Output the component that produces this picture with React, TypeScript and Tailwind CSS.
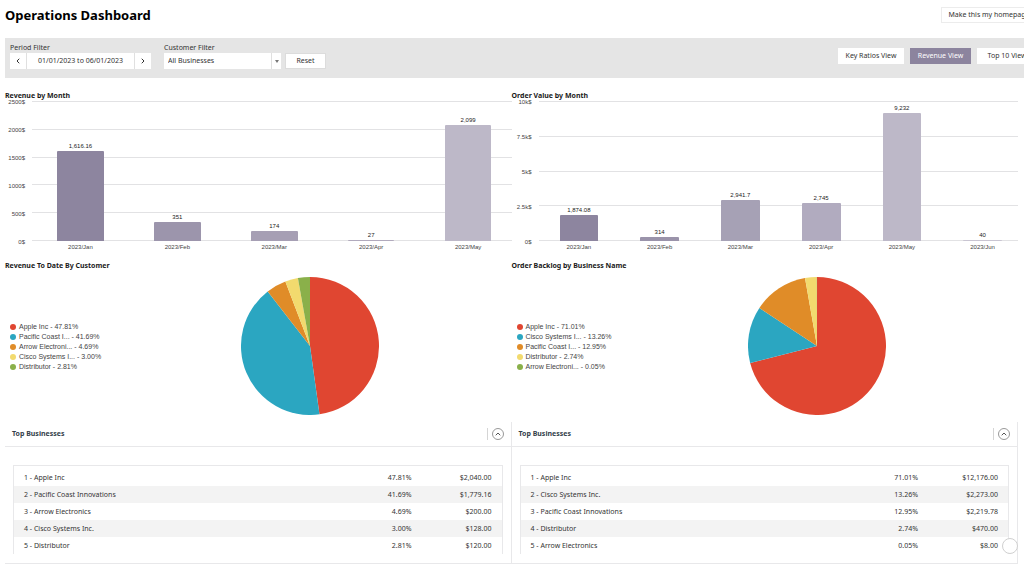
import { ChevronLeft, ChevronRight, ChevronUp } from "lucide-react";

type Bar = { month: string; value: number; label: string; color: string };
type Slice = { name: string; percent: number; color: string };
type Business = { name: string; percent: string; amount: string };

const RED = "#e04631";
const BLUE = "#2ba6c1";
const ORANGE = "#e08c28";
const YELLOW = "#f2da6e";
const GREEN = "#8ab04a";

const revenueBars: Bar[] = [
  { month: "2023/Jan", value: 1616.16, label: "1,616.16", color: "#8d859f" },
  { month: "2023/Feb", value: 351, label: "351", color: "#9c95ac" },
  { month: "2023/Mar", value: 174, label: "174", color: "#a69fb4" },
  { month: "2023/Apr", value: 27, label: "27", color: "#b1aabd" },
  { month: "2023/May", value: 2099, label: "2,099", color: "#bdb8c8" },
];

const orderBars: Bar[] = [
  { month: "2023/Jan", value: 1874.08, label: "1,874.08", color: "#8d859f" },
  { month: "2023/Feb", value: 314, label: "314", color: "#9a93aa" },
  { month: "2023/Mar", value: 2941.7, label: "2,941.7", color: "#a6a1b5" },
  { month: "2023/Apr", value: 2745, label: "2,745", color: "#b1abbf" },
  { month: "2023/May", value: 9232, label: "9,232", color: "#bdb8c8" },
  { month: "2023/Jun", value: 40, label: "40", color: "#c9c5d2" },
];

const revenueSlices: Slice[] = [
  { name: "Apple Inc", percent: 47.81, color: RED },
  { name: "Pacific Coast I...", percent: 41.69, color: BLUE },
  { name: "Arrow Electroni...", percent: 4.69, color: ORANGE },
  { name: "Cisco Systems I...", percent: 3.0, color: YELLOW },
  { name: "Distributor", percent: 2.81, color: GREEN },
];

const backlogSlices: Slice[] = [
  { name: "Apple Inc", percent: 71.01, color: RED },
  { name: "Cisco Systems I...", percent: 13.26, color: BLUE },
  { name: "Pacific Coast I...", percent: 12.95, color: ORANGE },
  { name: "Distributor", percent: 2.74, color: YELLOW },
  { name: "Arrow Electroni...", percent: 0.05, color: GREEN },
];

const revenueBusinesses: Business[] = [
  { name: "Apple Inc", percent: "47.81%", amount: "$2,040.00" },
  { name: "Pacific Coast Innovations", percent: "41.69%", amount: "$1,779.16" },
  { name: "Arrow Electronics", percent: "4.69%", amount: "$200.00" },
  { name: "Cisco Systems Inc.", percent: "3.00%", amount: "$128.00" },
  { name: "Distributor", percent: "2.81%", amount: "$120.00" },
];

const orderBusinesses: Business[] = [
  { name: "Apple Inc", percent: "71.01%", amount: "$12,176.00" },
  { name: "Cisco Systems Inc.", percent: "13.26%", amount: "$2,273.00" },
  { name: "Pacific Coast Innovations", percent: "12.95%", amount: "$2,219.78" },
  { name: "Distributor", percent: "2.74%", amount: "$470.00" },
  { name: "Arrow Electronics", percent: "0.05%", amount: "$8.00" },
];

function BarChart({ title, ticks, max, bars }: { title: string; ticks: string[]; max: number; bars: Bar[] }) {
  return (
    <section>
      <h2 className="h-[11px] text-[7px] leading-[11px] font-bold text-[#1a1a1a]">{title}</h2>
      <div className="flex font-['Liberation_Sans',sans-serif] text-[6px] leading-[8px] text-[#444]">
        <div className="flex h-[140px] w-[20px] flex-col justify-between text-right">
          {ticks.map((tick) => (
            <span key={tick} className="-mt-[3px] -mb-[5px]">{tick}</span>
          ))}
        </div>
        <div className="ml-[7px] flex-1">
          <div className="grid h-[140px]">
            <div className="col-start-1 row-start-1 flex flex-col justify-between">
              {ticks.map((tick) => (
                <div key={tick} className="h-px bg-[#e2e2e4]" />
              ))}
            </div>
            <div className="col-start-1 row-start-1 -mr-[5px] flex">
              {bars.map((bar) => (
                <div key={bar.month} className="flex flex-1 flex-col items-center justify-end">
                  <span className="mb-px text-[#222]">{bar.label}</span>
                  <div
                    className="w-[48%] rounded-t-[1px]"
                    style={{ height: `${(bar.value / max) * 99}%`, backgroundColor: bar.color }}
                  />
                </div>
              ))}
            </div>
          </div>
          <div className="-mr-[5px] flex h-[19px] pt-[2px]">
            {bars.map((bar) => (
              <span key={bar.month} className="flex-1 text-center">{bar.month}</span>
            ))}
          </div>
        </div>
      </div>
    </section>
  );
}

function Pie({ slices }: { slices: Slice[] }) {
  const point = (percent: number) => {
    const angle = (percent / 100) * Math.PI * 2;
    return `${Math.sin(angle) * 69} ${-Math.cos(angle) * 69}`;
  };
  let start = 0;

  return (
    <svg viewBox="-69 -69 138 138" className="h-[138px] w-[138px]" aria-hidden="true">
      {slices.map((slice) => {
        const from = start;
        start += slice.percent;
        return (
          <path
            key={slice.name}
            d={`M0 0 L${point(from)} A69 69 0 ${slice.percent > 50 ? 1 : 0} 1 ${point(start)} Z`}
            fill={slice.color}
          />
        );
      })}
    </svg>
  );
}

function PieChart({ title, slices }: { title: string; slices: Slice[] }) {
  return (
    <section>
      <h2 className="h-[17px] text-[7px] leading-[11px] font-bold text-[#1a1a1a]">{title}</h2>
      <div className="flex items-center">
        <ul className="w-[236px] pt-px pl-[5px] font-['Liberation_Sans',sans-serif] text-[7px] leading-[10px] text-[#444]">
          {slices.map((slice) => (
            <li key={slice.name} className="flex items-center gap-[3px]">
              <span className="h-[6px] w-[6px] rounded-full" style={{ backgroundColor: slice.color }} />
              {slice.name} - {slice.percent.toFixed(2)}%
            </li>
          ))}
        </ul>
        <Pie slices={slices} />
      </div>
    </section>
  );
}

function TopBusinesses({ rows }: { rows: Business[] }) {
  return (
    <section className="border-r border-b border-[#e8e8ea] pb-[9px]">
      <div className="flex h-[25px] items-center justify-between border-b border-[#e8e8ea] pr-[7px] pl-[7px]">
        <h2 className="text-[7px] leading-[10px] font-bold text-[#33404a]">Top Businesses</h2>
        <div className="flex items-center border-l border-[#d5d5d5] pl-[4px]">
          <button
            aria-label="Collapse Top Businesses"
            className="flex h-[12px] w-[12px] items-center justify-center rounded-full border border-[#999] text-[#555]"
          >
            <ChevronUp size={8} strokeWidth={3} />
          </button>
        </div>
      </div>
      <div className="mt-[18px] mr-[8px] ml-[8px] border-x border-t border-[#e8e8ea] pt-[3px]">
        <table className="w-full text-[7px] leading-[9px] text-[#333]">
          <tbody>
            {rows.map((row, i) => (
              <tr key={row.name} className="h-[17px] even:bg-[#f3f3f3]">
                <td className="pl-[10px]">{i + 1} - {row.name}</td>
                <td className="w-[80px] text-right">{row.percent}</td>
                <td className="w-[90px] pr-[10px] text-right">{row.amount}</td>
              </tr>
            ))}
          </tbody>
        </table>
      </div>
    </section>
  );
}

export default function App() {
  return (
    <main className="overflow-hidden bg-white pl-[5px] font-['Noto_Sans',sans-serif] text-[7px] text-[#333]">
      {/* the toolbar runs past the right edge of the window */}
      <div className="-mr-[17px]">
        <header className="flex h-[38px] items-start justify-between pr-[4px]">
          <h1 className="pt-[5px] text-[13px] leading-[20px] font-bold text-black">Operations Dashboard</h1>
          <button className="mt-[7px] h-[16px] w-[96px] border border-[#ececec] whitespace-nowrap">
            Make this my homepage
          </button>
        </header>

        <div className="flex h-[40px] items-start justify-between bg-[#e5e5e5] pr-[4px] pl-[5px]">
          <div className="flex items-end pt-[5px]">
            <div>
              <label htmlFor="period" className="block h-[10px] leading-[10px]">Period Filter</label>
              <div className="flex h-[16px] w-[141px] bg-white">
                <button aria-label="Previous period" className="flex w-[17px] items-center justify-center border-r border-[#e0e0e0]">
                  <ChevronLeft size={8} strokeWidth={3} />
                </button>
                <input id="period" readOnly value="01/01/2023 to 06/01/2023" className="w-0 flex-1 text-center" />
                <button aria-label="Next period" className="flex w-[17px] items-center justify-center border-l border-[#e0e0e0]">
                  <ChevronRight size={8} strokeWidth={3} />
                </button>
              </div>
            </div>
            <div className="ml-[13px]">
              <label htmlFor="customer" className="block h-[10px] leading-[10px]">Customer Filter</label>
              <div className="flex h-[16px] w-[117px] bg-white">
                <select id="customer" className="w-0 flex-1 appearance-none pl-[4px]">
                  <option>All Businesses</option>
                </select>
                <span className="flex w-[10px] items-center justify-center border-l border-[#e0e0e0]">
                  <svg viewBox="0 0 4 3" className="h-[3px] w-[4px] fill-[#777]">
                    <path d="M0 0h4L2 3z" />
                  </svg>
                </span>
              </div>
            </div>
            <button className="ml-[4px] h-[16px] w-[41px] border border-[#dcdcdc] bg-white">Reset</button>
          </div>
          <nav className="flex gap-[6px] pt-[10px]">
            <button className="h-[16px] w-[66px] bg-white">Key Ratios View</button>
            <button className="h-[16px] w-[61px] bg-[#8c849e] text-white">Revenue View</button>
            <button className="h-[16px] w-[60px] bg-white">Top 10 View</button>
          </nav>
        </div>
      </div>

      <div className="relative mr-[6px] grid grid-cols-2 pt-[12px]">
        <BarChart
          title="Revenue by Month"
          ticks={["2500$", "2000$", "1500$", "1000$", "500$", "0$"]}
          max={2500}
          bars={revenueBars}
        />
        <BarChart
          title="Order Value by Month"
          ticks={["10k$", "7.5k$", "5k$", "2.5k$", "0$"]}
          max={10000}
          bars={orderBars}
        />
        <PieChart title="Revenue To Date By Customer" slices={revenueSlices} />
        <PieChart title="Order Backlog by Business Name" slices={backlogSlices} />
        <div className="pt-[7px]">
          <TopBusinesses rows={revenueBusinesses} />
        </div>
        <div className="pt-[7px]">
          <TopBusinesses rows={orderBusinesses} />
        </div>
        <button
          aria-label="Open help"
          className="absolute right-0 bottom-[10px] h-[16px] w-[16px] rounded-full border border-[#d0d0d0] bg-white"
        />
      </div>
    </main>
  );
}
